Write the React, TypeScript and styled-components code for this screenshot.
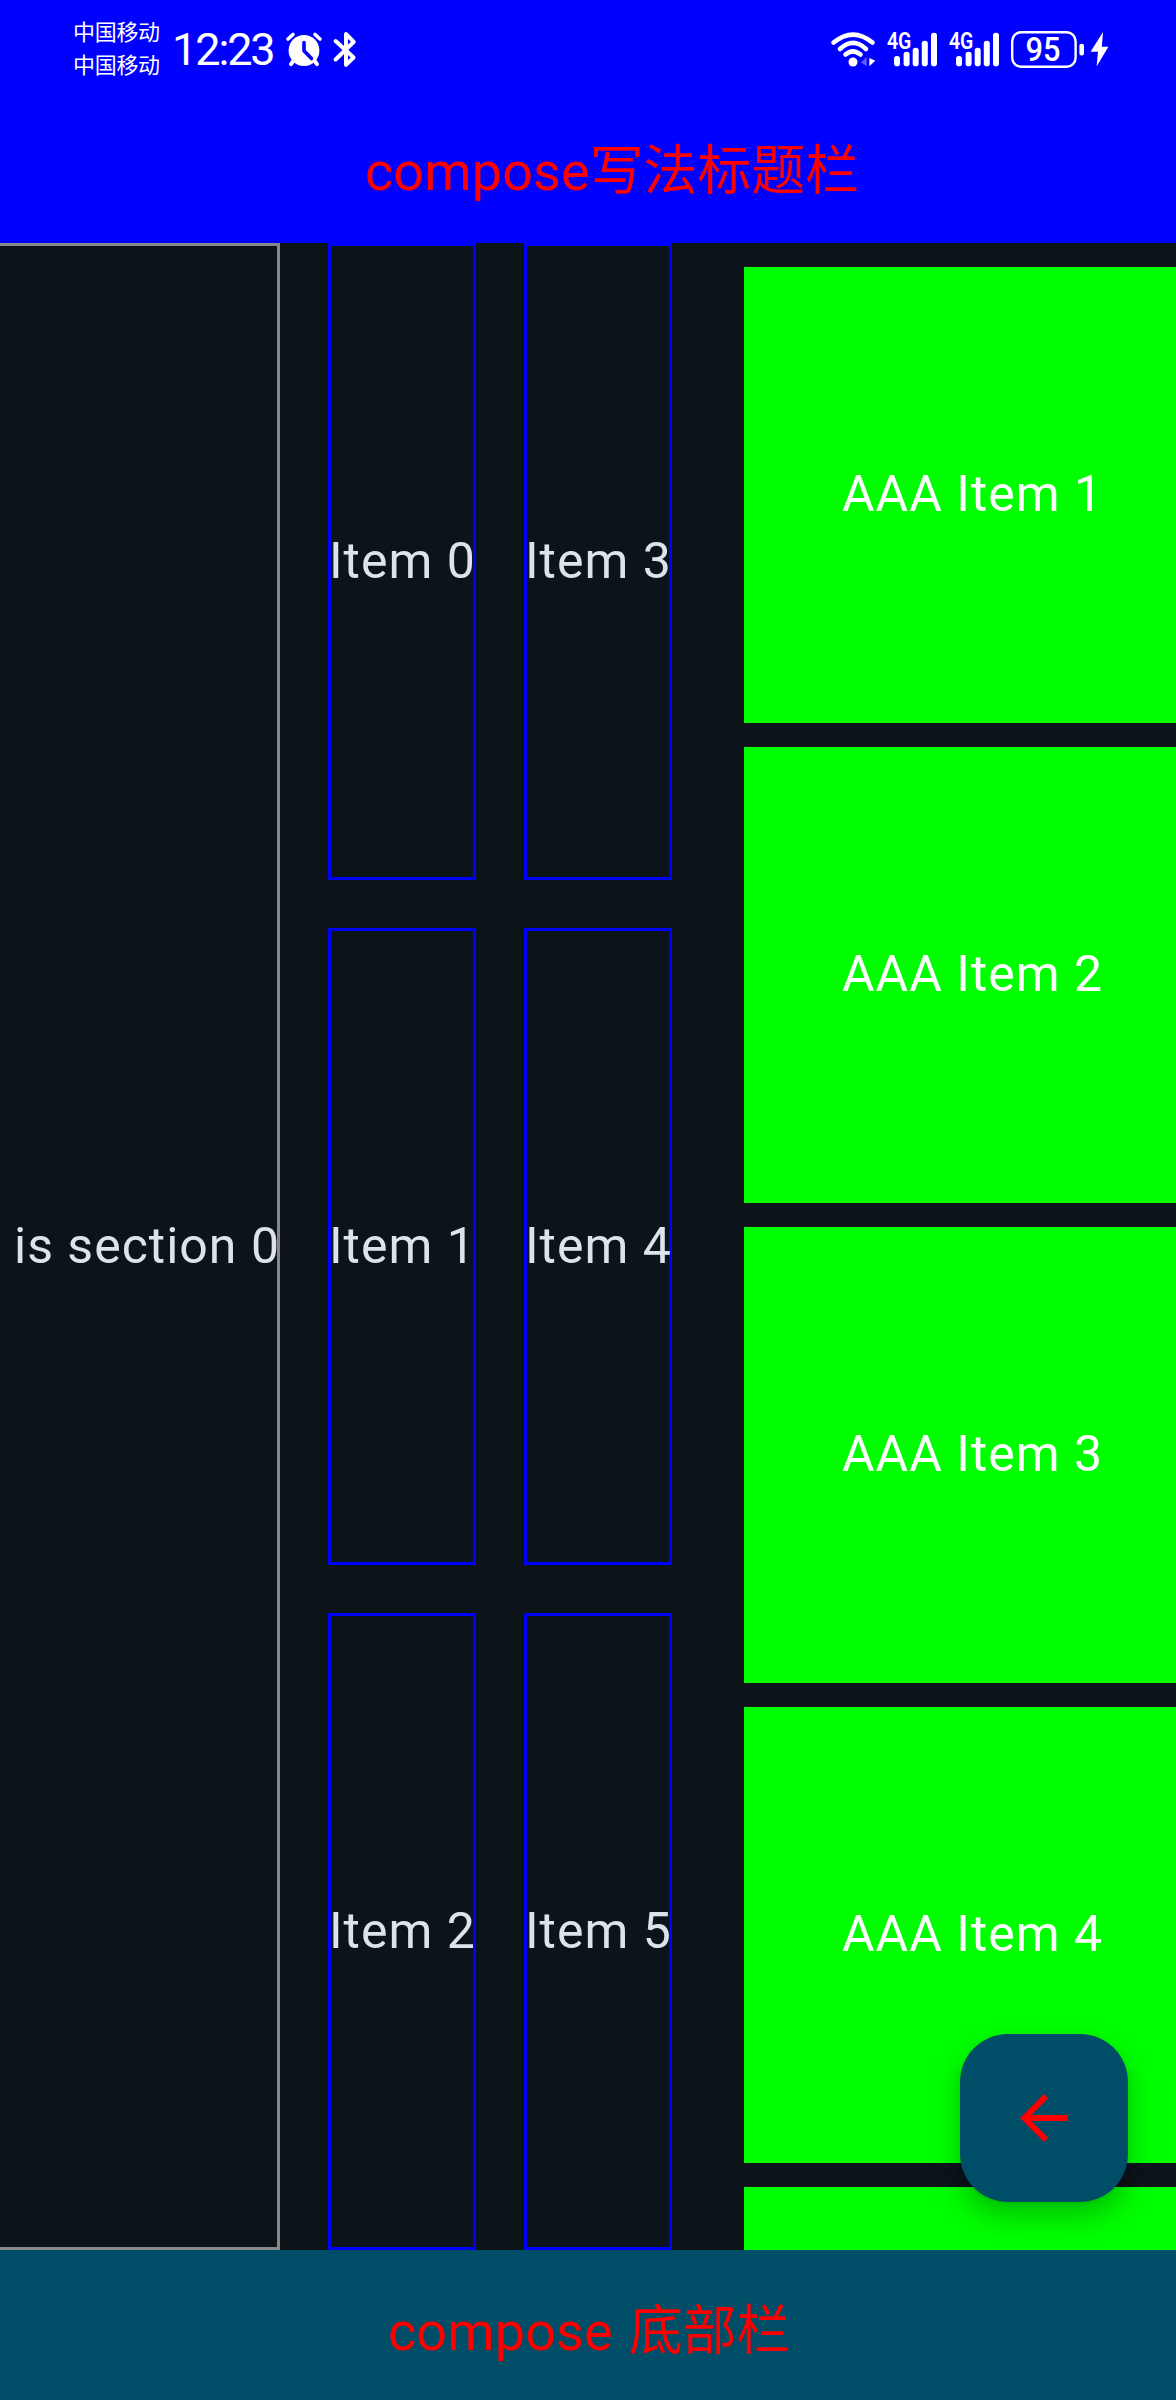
import React from "react";
import styled, { createGlobalStyle } from "styled-components";

const GlobalStyle = createGlobalStyle`
  html, body {
    margin: 0;
    padding: 0;
    background: #0c1319;
  }
  * { box-sizing: border-box; }
`;

const latin = `Roboto, "Noto Sans CJK SC", sans-serif`;
const cjk = `"Noto Sans CJK SC", sans-serif`;

const Screen = styled.div`
  position: relative;
  display: flex;
  flex-direction: column;
  width: 1176px;
  height: 2400px;
  overflow: hidden;
  background: #0c1319;
  font-family: ${latin};
`;

const Header = styled.header`
  display: flex;
  flex-direction: column;
  height: 243px;
  flex: none;
  background: #0000ff;
`;

const StatusBar = styled.div`
  display: flex;
  justify-content: space-between;
  height: 99px;
  padding: 0 66px 0 73px;
  color: #fff;
`;

const StatusGroup = styled.div`
  display: flex;
  align-items: center;
  height: 99px;
`;

const Carriers = styled.div`
  display: flex;
  flex-direction: column;
  width: 99px;
  padding-bottom: 5px;
  font: 400 22px/33px ${cjk};
  letter-spacing: -0.3px;
`;

const Clock = styled.div`
  width: 113px;
  padding-top: 1px;
  font: 400 45px/98px ${latin};
  letter-spacing: -2.1px;
`;

const StatusIcon = styled.svg`
  display: block;
  flex: none;
  overflow: visible;
`;

const TitleRow = styled.div`
  display: flex;
  align-items: baseline;
  padding-left: 365px;
  height: 144px;
  line-height: 135px;
  color: #ff0000;
  white-space: pre;
`;

const Word = styled.span<{ $spacing: number }>`
  font-family: ${latin};
  font-size: 54px;
  letter-spacing: ${(p) => p.$spacing}px;
`;

const Hanzi = styled.span<{ $spacing: number; $gap: number }>`
  margin-left: ${(p) => p.$gap}px;
  font-family: ${cjk};
  font-size: 54px;
  font-weight: 400;
  letter-spacing: ${(p) => p.$spacing}px;
`;

const Content = styled.main`
  display: flex;
  flex: none;
  height: 2007px;
  overflow: hidden;
`;

const Section = styled.section`
  display: flex;
  align-items: center;
  justify-content: flex-end;
  flex: none;
  width: 280px;
  border: 3px solid #888;
  border-left: 0;
`;

const Label = styled.span<{ $color?: string }>`
  padding-bottom: 2px;
  font-size: 50px;
  line-height: 58px;
  letter-spacing: 1px;
  white-space: pre;
  color: ${(p) => p.$color ?? "#dee3eb"};
`;

const SectionLabel = styled(Label)`
  margin-right: -3px;
`;

const ItemGrid = styled.div`
  display: grid;
  flex: none;
  grid-auto-flow: column;
  grid-template-rows: repeat(3, 637px);
  grid-auto-columns: 148px;
  gap: 48px;
  margin-left: 48px;
`;

const ItemCell = styled.div`
  display: flex;
  align-items: center;
  border: 3px solid #0000ff;
`;

const ItemLabel = styled(Label)`
  margin-left: -2px;
`;

const CardColumn = styled.div`
  display: flex;
  flex-direction: column;
  flex: none;
  gap: 24px;
  margin-left: 72px;
  padding-top: 24px;
`;

const Card = styled.div`
  display: flex;
  flex: none;
  align-items: center;
  width: 456px;
  height: 456px;
  padding-left: 98px;
  background: #00ff00;
`;

const Footer = styled.footer`
  display: flex;
  align-items: baseline;
  flex: none;
  height: 150px;
  padding: 20px 0 0 388px;
  line-height: 114px;
  background: #004d67;
  color: #ff0000;
  white-space: pre;
`;

const Fab = styled.button`
  position: absolute;
  right: 48px;
  bottom: 198px;
  display: flex;
  align-items: center;
  justify-content: center;
  width: 168px;
  height: 168px;
  padding: 0;
  border: 0;
  border-radius: 48px;
  background: #004d67;
  box-shadow: 0 14px 30px rgba(0, 0, 0, 0.25), 0 2px 6px rgba(0, 0, 0, 0.06);
`;

const AlarmIcon = () => (
  <StatusIcon width="38" height="38" viewBox="285 31 38 38">
    <circle cx="304" cy="50.5" r="15.4" fill="#fff" />
    <path d="M288 39 L293 34.5 M320 39 L315 34.5" stroke="#fff" strokeWidth="3.6" strokeLinecap="round" />
    <path d="M294 60 L291 64.2 M314 60 L317 64.2" stroke="#fff" strokeWidth="4" strokeLinecap="round" />
    <path d="M304 42.5 V50.8 L311.5 58.5" stroke="#0000ff" strokeWidth="3.6" strokeLinecap="round" strokeLinejoin="round" fill="none" />
  </StatusIcon>
);

const BluetoothIcon = () => (
  <StatusIcon width="34" height="38" viewBox="323 31 34 38">
    <path
      d="M335.6 41 L353.6 57.5 L346 64.8 V54 M346 46 V34 L353.8 41.8 L335.6 59.5"
      stroke="#fff"
      strokeWidth="4"
      strokeLinecap="round"
      strokeLinejoin="round"
      fill="none"
    />
  </StatusIcon>
);

const WifiIcon = () => (
  <StatusIcon width="56" height="38" viewBox="831 31 56 38">
    <g stroke="#fff" strokeWidth="4.6" strokeLinecap="round" fill="none">
      <path d="M833.5 42.6 Q853 26.5 872.5 42.6" />
      <path d="M840 49 Q853 36.8 866 49" />
      <path d="M845.5 54.6 Q853 48 860.5 54.6" />
    </g>
    <circle cx="853" cy="62" r="4.5" fill="#fff" />
    <path d="M861 62.5 L866.6 57 V66 Z" fill="#6060ff" />
    <path d="M869.3 58 L875.3 60.8 L869.3 66.2 Z" fill="#fff" />
  </StatusIcon>
);

const bars = [
  [7, 56],
  [16.6, 51.7],
  [25.7, 47.7],
  [34.8, 40.7],
  [44, 32.7],
];

const SignalIcon = () => (
  <StatusIcon width="62" height="58" viewBox="0 21 62 58">
    <text x="0" y="49.3" fontFamily="Roboto, sans-serif" fontSize="23" fontWeight="600" textLength="24.4" lengthAdjust="spacingAndGlyphs" fill="#fff">
      4G
    </text>
    {bars.map(([x, y]) => (
      <rect key={x} x={x} y={y} width="6" height={66.2 - y} rx="2.8" fill="#fff" />
    ))}
  </StatusIcon>
);

const BatteryIcon = () => (
  <StatusIcon width="99" height="38" viewBox="1011 31 99 38">
    <rect x="1012.2" y="32.2" width="63.4" height="34.6" rx="9" stroke="#fff" strokeWidth="2.4" fill="none" />
    <text x="1025.4" y="61.2" fontFamily="Roboto, sans-serif" fontSize="33" fontWeight="500" textLength="35" lengthAdjust="spacingAndGlyphs" fill="#fff">
      95
    </text>
    <rect x="1079.4" y="43.7" width="4.6" height="11.8" rx="2" fill="#fff" />
    <path d="M1103 32 L1090.6 51.8 H1098 L1096.6 66.6 L1108.4 46.8 H1101.8 Z" fill="#fff" />
  </StatusIcon>
);

const items = [0, 1, 2, 3, 4, 5];
const cards = [1, 2, 3, 4, 5];

export default function App() {
  return (
    <>
      <GlobalStyle />
      <Screen>
        <Header>
          <StatusBar>
            <StatusGroup>
              <Carriers>
                <span>中国移动</span>
                <span>中国移动</span>
              </Carriers>
              <Clock>12:23</Clock>
              <AlarmIcon />
              <BluetoothIcon />
            </StatusGroup>
            <StatusGroup>
              <WifiIcon />
              <SignalIcon />
              <SignalIcon />
              <BatteryIcon />
            </StatusGroup>
          </StatusBar>
          <TitleRow>
            <Word $spacing={0.1}>compose</Word>
            <Hanzi $spacing={-0.2} $gap={0}>写法标题栏</Hanzi>
          </TitleRow>
        </Header>
        <Content>
          <Section>
            <SectionLabel>is section 0</SectionLabel>
          </Section>
          <ItemGrid>
            {items.map((n) => (
              <ItemCell key={n}>
                <ItemLabel>{`Item ${n}`}</ItemLabel>
              </ItemCell>
            ))}
          </ItemGrid>
          <CardColumn>
            {cards.map((n) => (
              <Card key={n}>
                <Label $color="#fff">{`AAA Item ${n}`}</Label>
              </Card>
            ))}
          </CardColumn>
        </Content>
        <Footer>
          <Word $spacing={0.1}>compose</Word>
          <Hanzi $spacing={-0.2} $gap={16}>底部栏</Hanzi>
        </Footer>
        <Fab aria-label="返回">
          <svg width="72" height="72" viewBox="0 0 24 24" fill="#ff0000">
            <path d="M20 11H7.83l5.59-5.59L12 4l-8 8 8 8 1.41-1.41L7.83 13H20v-2z" />
          </svg>
        </Fab>
      </Screen>
    </>
  );
}
